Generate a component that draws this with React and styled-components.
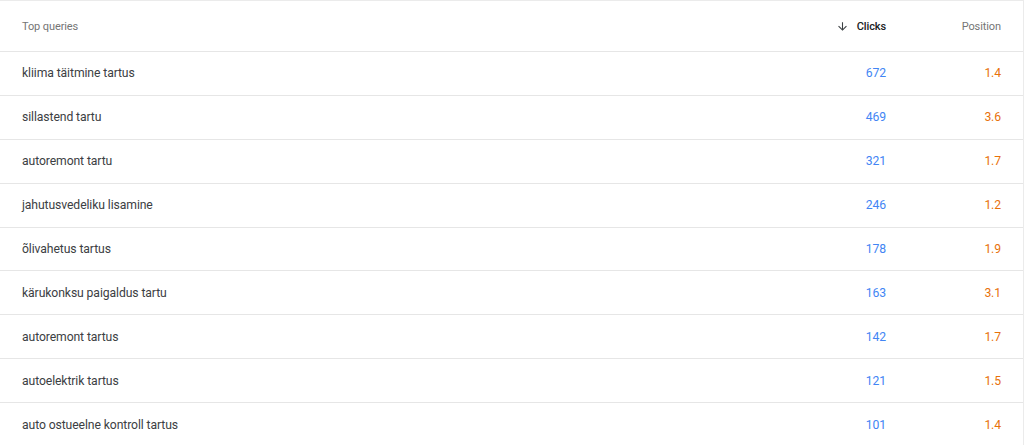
import React from 'react';
import styled, { createGlobalStyle } from 'styled-components';

const GlobalStyle = createGlobalStyle`
  body {
    margin: 0;
    background: #fff;
    font-family: Roboto, "Liberation Sans", Arial, sans-serif;
  }
`;

const rows = [
  { query: 'kliima täitmine tartus', clicks: 672, position: '1.4' },
  { query: 'sillastend tartu', clicks: 469, position: '3.6' },
  { query: 'autoremont tartu', clicks: 321, position: '1.7' },
  { query: 'jahutusvedeliku lisamine', clicks: 246, position: '1.2' },
  { query: 'õlivahetus tartus', clicks: 178, position: '1.9' },
  { query: 'kärukonksu paigaldus tartu', clicks: 163, position: '3.1' },
  { query: 'autoremont tartus', clicks: 142, position: '1.7' },
  { query: 'autoelektrik tartus', clicks: 121, position: '1.5' },
  { query: 'auto ostueelne kontroll tartus', clicks: 101, position: '1.4' },
];

const Card = styled.div`
  border-top: 1px solid #ebebeb;
  border-right: 1px solid #ebebeb;
  height: 445px;
  box-sizing: border-box;
  overflow: hidden;
`;

const Row = styled.div`
  display: grid;
  grid-template-columns: 1fr 120px 115px;
  align-items: center;
  height: ${(p) => (p.$head ? '50px' : '42.9px')};
  padding: 0 22px 0 22px;
  border-bottom: 1px solid #e6e6e6;
  font-size: ${(p) => (p.$head ? '11px' : '12.2px')};
  letter-spacing: -0.1px;
  color: ${(p) => (p.$head ? '#757575' : '#3c4043')};
`;

const Cell = styled.div`
  color: ${(p) => p.$color || 'inherit'};
  font-weight: ${(p) => (p.$bold ? 500 : 400)};
  display: flex;
  justify-content: ${(p) => (p.$right ? 'flex-end' : 'flex-start')};
  align-items: center;
  gap: 8px;
`;

const Arrow = () => (
  <svg width="13" height="13" viewBox="0 0 24 24" fill="#3c4043">
    <path d="M20 12l-1.41-1.41L13 16.17V4h-2v12.17l-5.58-5.59L4 12l8 8 8-8z" />
  </svg>
);

export default function App() {
  return (
    <>
      <GlobalStyle />
      <Card>
        <Row $head>
          <Cell>Top queries</Cell>
          <Cell $right $bold $color="#202124">
            <Arrow />
            Clicks
          </Cell>
          <Cell $right>Position</Cell>
        </Row>
        {rows.map((r) => (
          <Row key={r.query}>
            <Cell>{r.query}</Cell>
            <Cell $right $color="#4285f4">{r.clicks}</Cell>
            <Cell $right $color="#e8710a">{r.position}</Cell>
          </Row>
        ))}
      </Card>
    </>
  );
}
